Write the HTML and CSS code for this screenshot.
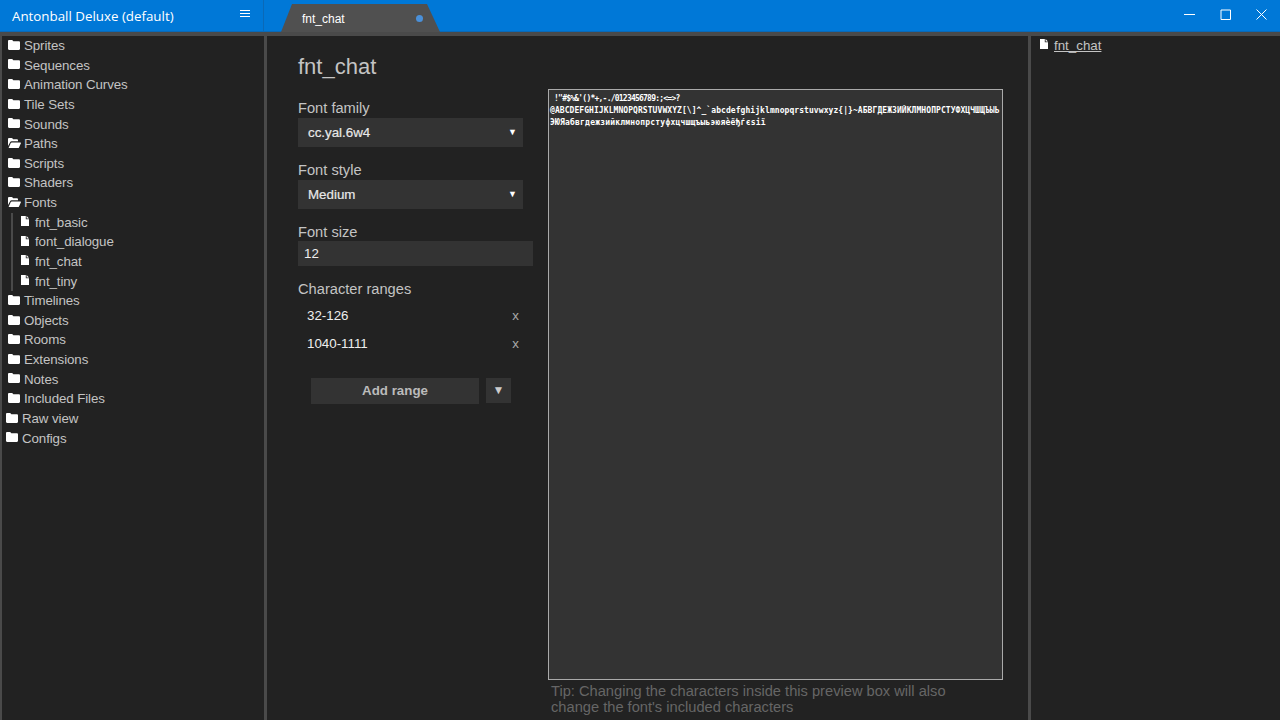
FILE: index.html
```html
<!DOCTYPE html>
<html lang="en">
<head>
<meta charset="utf-8">
<title>fnt_chat</title>
<link rel="stylesheet" href="styles.css">
</head>
<body>
<svg class="defs" width="0" height="0" aria-hidden="true">
  <symbol id="folder" viewBox="0 0 12 10"><path d="M0 1.2C0 .5.5 0 1.2 0h2.6c.5 0 .8.2 1 .5l.5.8h5.500c.7 0 1.200.5 1.200 1.200v6.300c0 .7-.5 1.200-1.200 1.200H1.200C.5 10 0 9.500 0 8.800z" fill="#fff"/></symbol>
  <symbol id="folder-open" viewBox="0 0 13 10"><path d="M0 8V1.200C0 .5.500 0 1.200 0h2.400c.5 0 .8.2 1 .5l.5.8h3.700c.7 0 1.200.5 1.200 1.200V3.300H3.600c-.7 0-1.200.3-1.500.9zM.6 10l2.200-5c.2-.4.500-.6 1-.6h8.600c.4 0 .7.400.5.800l-1.900 4.200c-.2.400-.5.600-1 .6z" fill="#fff"/></symbol>
  <symbol id="file" viewBox="0 0 8 10"><path d="M0 0h4.800v3.200H8V10H0zM5.600 0 8 2.400H5.600z" fill="#fff"/></symbol>
</svg>

<header class="titlebar">
  <div class="project">
    <span class="project-name">Antonball Deluxe (default)</span>
    <svg class="hamburger" width="10" height="8" viewBox="0 0 10 8"><path d="M0 .5h10M0 3.500h10M0 6.500h10" stroke="#fff" stroke-width="1"/></svg>
  </div>
  <div class="tabs">
    <div class="tab"><span class="tab-name">fnt_chat</span><span class="tab-dot"></span></div>
  </div>
  <div class="window-controls">
    <svg width="11" height="11" viewBox="0 0 11 11"><path d="M0 5.500h11" stroke="#fff" fill="none"/></svg>
    <svg width="11" height="11" viewBox="0 0 11 11"><path d="M1 1h9.500v9.500H1z" stroke="#fff" fill="none"/></svg>
    <svg width="11" height="11" viewBox="0 0 11 11"><path d="M.5.500l10 10M10.500.500l-10 10" stroke="#fff" fill="none"/></svg>
  </div>
</header>
<div class="rule"></div>

<div class="workspace">
  <nav class="sidebar">
    <ul class="tree">
      <li><svg class="ico-folder"><use href="#folder"/></svg>Sprites</li>
      <li><svg class="ico-folder"><use href="#folder"/></svg>Sequences</li>
      <li><svg class="ico-folder"><use href="#folder"/></svg>Animation Curves</li>
      <li><svg class="ico-folder"><use href="#folder"/></svg>Tile Sets</li>
      <li><svg class="ico-folder"><use href="#folder"/></svg>Sounds</li>
      <li><svg class="ico-open"><use href="#folder-open"/></svg>Paths</li>
      <li><svg class="ico-folder"><use href="#folder"/></svg>Scripts</li>
      <li><svg class="ico-folder"><use href="#folder"/></svg>Shaders</li>
      <li><svg class="ico-open"><use href="#folder-open"/></svg>Fonts</li>
    </ul>
    <ul class="tree children">
      <li><svg class="ico-file"><use href="#file"/></svg>fnt_basic</li>
      <li><svg class="ico-file"><use href="#file"/></svg>font_dialogue</li>
      <li><svg class="ico-file"><use href="#file"/></svg>fnt_chat</li>
      <li><svg class="ico-file"><use href="#file"/></svg>fnt_tiny</li>
    </ul>
    <ul class="tree">
      <li><svg class="ico-folder"><use href="#folder"/></svg>Timelines</li>
      <li><svg class="ico-folder"><use href="#folder"/></svg>Objects</li>
      <li><svg class="ico-folder"><use href="#folder"/></svg>Rooms</li>
      <li><svg class="ico-folder"><use href="#folder"/></svg>Extensions</li>
      <li><svg class="ico-folder"><use href="#folder"/></svg>Notes</li>
      <li><svg class="ico-folder"><use href="#folder"/></svg>Included Files</li>
    </ul>
    <ul class="tree top">
      <li><svg class="ico-folder"><use href="#folder"/></svg>Raw view</li>
      <li><svg class="ico-folder"><use href="#folder"/></svg>Configs</li>
    </ul>
  </nav>
  <div class="splitter"></div>

  <main class="editor">
    <h1 class="editor-title">fnt_chat</h1>
    <div class="editor-columns">
      <form class="font-form">
        <div class="label">Font family</div>
        <div class="select"><span>cc.yal.6w4</span><span class="select-arrow">▼</span></div>
        <div class="label">Font style</div>
        <div class="select"><span>Medium</span><span class="select-arrow">▼</span></div>
        <div class="label label-size">Font size</div>
        <div class="input">12</div>
        <div class="label label-ranges">Character ranges</div>
        <div class="range"><span>32-126</span><span class="range-x">x</span></div>
        <div class="range"><span>1040-1111</span><span class="range-x">x</span></div>
        <div class="range-actions">
          <div class="btn-add">Add range</div>
          <div class="btn-more">▼</div>
        </div>
      </form>
      <section class="preview-col">
        <div class="preview">
          <div class="line line-1"> !"#$%&amp;'()*+,-./0123456789:;&lt;=&gt;?</div>
          <div class="line line-2">@ABCDEFGHIJKLMNOPQRSTUVWXYZ[\]^_`abcdefghijklmnopqrstuvwxyz{|}~АБВГДЕЖЗИЙКЛМНОПРСТУФХЦЧШЩЪЫЬ</div>
          <div class="line line-3">ЭЮЯабвгдежзийклмнопрстуфхцчшщъыьэюяѐёђѓєѕії</div>
        </div>
        <p class="tip">Tip: Changing the characters inside this preview box will also<br>change the font's included characters</p>
      </section>
    </div>
  </main>

  <div class="splitter"></div>
  <aside class="outline">
    <div class="outline-item"><svg class="ico-file"><use href="#file"/></svg><span class="outline-link">fnt_chat</span></div>
  </aside>
</div>
</body>
</html>
```
FILE: styles.css
```css
* { box-sizing: border-box; }
html, body { margin: 0; height: 100%; overflow: hidden; }
body {
  width: 1280px;
  height: 720px;
  background: #222;
  color: #c4c4c4;
  font-family: "Liberation Sans", Arial, sans-serif;
  display: flex;
  flex-direction: column;
}
.defs { position: absolute; }

.titlebar {
  height: 32px;
  flex: none;
  display: flex;
  background: #0078d7;
  box-shadow: inset 0 -1px 0 #0a69b7;
  color: #fff;
}
.project {
  width: 264px;
  flex: none;
  display: flex;
  align-items: center;
  justify-content: space-between;
  padding: 2px 13px 0 12px;
  border-right: 1px solid #0a69b7;
}
.project-name { font: 13.33px/1 "Open Sans", sans-serif; }
.hamburger { margin-top: -6px; }
.tabs { flex: 1; padding: 4px 0 0 17px; }
.tab {
  width: 159px;
  height: 28px;
  background: #505050;
  clip-path: polygon(0 100%, 11px 0, 146px 0, 159px 100%);
  display: flex;
  align-items: center;
  justify-content: space-between;
  padding: 2px 17px 0 21px;
}
.tab-name { font-size: 12px; color: #fff; }
.tab-dot { width: 7px; height: 7px; border-radius: 50%; background: #4a90d9; margin-top: -2px; }
.window-controls {
  display: flex;
  gap: 25px;
  padding: 9px 13px 0 0;
}
.window-controls svg { display: block; }
.rule { height: 4px; flex: none; background: #4a4a4a; }

.workspace { flex: 1; display: flex; min-height: 0; }
.sidebar {
  width: 264px;
  flex: none;
  border-left: 2px solid #4a4a4a;
  font-size: 13.33px;
  letter-spacing: -0.1px;
}
.tree { list-style: none; margin: 0; padding: 0 0 0 6px; }
.tree li {
  height: 19.63px;
  line-height: 19.63px;
  display: flex;
  align-items: center;
  white-space: nowrap;
}
.tree.children {
  margin-left: 9px;
  padding-left: 8px;
  border-left: 2px solid #4a4a4a;
}
.tree.top { padding-left: 4px; }
.tree.top li svg { margin-right: 4px; }
.ico-folder { width: 12px; height: 10px; margin-right: 4px; margin-top: -2px; flex: none; }
.ico-open { width: 13px; height: 10px; margin-right: 3px; margin-top: -2px; flex: none; }
.ico-file { width: 8px; height: 10px; margin-right: 6px; margin-top: -3px; flex: none; }
.splitter { width: 3px; flex: none; background: #4a4a4a; }

.editor { width: 761px; flex: none; padding: 0 0 0 31px; }
.editor-title {
  margin: 0;
  font-size: 22px;
  line-height: 26px;
  font-weight: 400;
  padding-top: 18px;
  height: 53px;
}
.editor-columns { display: flex; gap: 15px; }
.font-form { width: 235px; flex: none; }
.label { font-size: 14.67px; line-height: 18px; padding-top: 10px; height: 29px; }
.label-size { height: 28px; }
.select {
  width: 225px;
  height: 29px;
  background: #333;
  display: flex;
  align-items: center;
  justify-content: space-between;
  padding: 0 6px 0 10px;
  font-size: 13.33px;
  color: #e8e8e8;
  margin-bottom: 4px;
  -webkit-text-stroke: 0.2px #e8e8e8;
}
.select-arrow { font-size: 9px; color: #fff; -webkit-text-stroke: 0; margin-top: -1px; }
.input {
  height: 25px;
  background: #333;
  padding-left: 6px;
  font-size: 13.33px;
  line-height: 25px;
  color: #eee;
}
.label-ranges { height: 35px; padding-top: 14px; }
.range {
  width: 221px;
  height: 28px;
  display: flex;
  align-items: center;
  justify-content: space-between;
  padding-left: 9px;
  font-size: 13.33px;
  color: #eee;
}
.range-x { color: #aaa; font-size: 13.33px; }
.range-actions { display: flex; gap: 7px; padding: 21px 0 0 13px; align-items: flex-start; }
.btn-add {
  width: 168px;
  height: 26px;
  background: #333;
  color: #bbb;
  font-size: 13.33px;
  font-weight: 700;
  text-align: center;
  line-height: 26px;
}
.btn-more {
  width: 25px;
  height: 25px;
  background: #333;
  color: #ccc;
  font-size: 12px;
  text-align: center;
  line-height: 25px;
}
.preview-col { width: 455px; flex: none; }
.preview {
  height: 591px;
  background: #333;
  border: 1px solid #aaa;
  padding-top: 3px;
  color: #fff;
  font-family: "DejaVu Sans Mono", monospace;
  font-size: 8px;
  font-weight: 700;
}
.line { height: 12px; line-height: 12px; white-space: pre; overflow: hidden; }
.line-1 { padding-left: 1px; letter-spacing: -0.77px; }
.line-2 { padding-left: 1px; letter-spacing: 0.07px; }
.line-3 { padding-left: 1px; letter-spacing: 0.2px; }
.tip {
  margin: 3px 0 0 3px;
  color: #666;
  font-size: 14.67px;
  line-height: 16px;
}

.outline { flex: 1; padding: 0 0 0 9px; font-size: 13.33px; }
.outline-item { height: 19.63px; display: flex; align-items: center; line-height: 19.63px; }
.outline-link { text-decoration: underline; }
```
